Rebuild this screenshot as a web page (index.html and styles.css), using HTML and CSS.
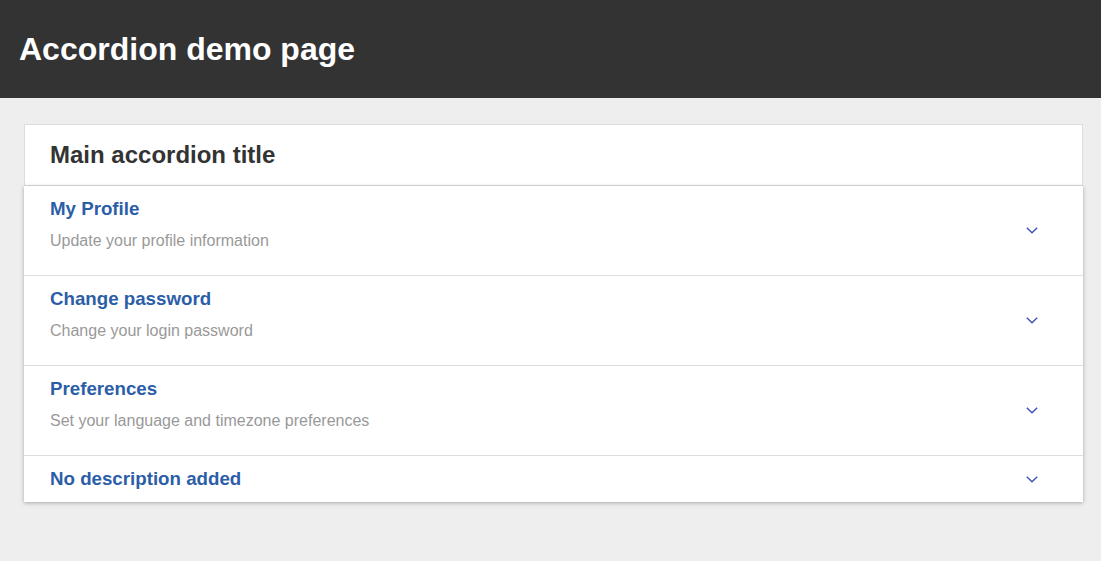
FILE: index.html
```html
<!DOCTYPE html>
<html lang="en">
<head>
<meta charset="utf-8">
<title>Accordion demo page</title>
<link rel="stylesheet" href="styles.css">
</head>
<body>
<header class="topbar">
  <h1 class="page-title">Accordion demo page</h1>
</header>
<main class="content">
  <section class="accordion">
    <div class="accordion-head">
      <h2 class="accordion-title">Main accordion title</h2>
    </div>
    <div class="accordion-items">
      <div class="item">
        <div class="item-text">
          <h3 class="item-title">My Profile</h3>
          <p class="item-desc">Update your profile information</p>
        </div>
        <svg class="chev" width="12" height="7" viewBox="0 0 12 7"><polyline points="0.8,0.8 6,5.8 11.2,0.8" fill="none" stroke="#3f51b5" stroke-width="1.4"/></svg>
      </div>
      <div class="item">
        <div class="item-text">
          <h3 class="item-title">Change password</h3>
          <p class="item-desc">Change your login password</p>
        </div>
        <svg class="chev" width="12" height="7" viewBox="0 0 12 7"><polyline points="0.8,0.8 6,5.8 11.2,0.8" fill="none" stroke="#3f51b5" stroke-width="1.4"/></svg>
      </div>
      <div class="item">
        <div class="item-text">
          <h3 class="item-title">Preferences</h3>
          <p class="item-desc">Set your language and timezone preferences</p>
        </div>
        <svg class="chev" width="12" height="7" viewBox="0 0 12 7"><polyline points="0.8,0.8 6,5.8 11.2,0.8" fill="none" stroke="#3f51b5" stroke-width="1.4"/></svg>
      </div>
      <div class="item item-last">
        <div class="item-text">
          <h3 class="item-title">No description added</h3>
        </div>
        <svg class="chev" width="12" height="7" viewBox="0 0 12 7"><polyline points="0.8,0.8 6,5.8 11.2,0.8" fill="none" stroke="#3f51b5" stroke-width="1.4"/></svg>
      </div>
    </div>
  </section>
</main>
</body>
</html>
```
FILE: styles.css
```css
html, body {
  margin: 0;
  padding: 0;
}
body {
  background: #eeeeee;
  font-family: "Liberation Sans", Arial, sans-serif;
}
.topbar {
  background: #333333;
  height: 98px;
  padding: 0 19px;
  display: flex;
  align-items: center;
}
.page-title {
  margin: 0;
  color: #ffffff;
  font-size: 32px;
  font-weight: bold;
}
.content {
  padding: 26px 18px 40px 24px;
}
.accordion {
  background: #ffffff;
}
.accordion-head {
  border: 1px solid #dddddd;
  box-sizing: border-box;
  height: 62px;
  padding: 0 25px;
  display: flex;
  align-items: center;
}
.accordion-title {
  margin: 0;
  font-size: 24px;
  font-weight: bold;
  color: #333333;
  line-height: 28px;
}
.accordion-items {
  background: #ffffff;
  box-shadow: 0 1px 4px rgba(0, 0, 0, 0.3);
}
.item {
  display: flex;
  align-items: center;
  padding: 12px 45px 12px 26px;
  border-bottom: 1px solid #dddddd;
}
.item-last {
  border-bottom: none;
}
.item-text {
  flex: 1;
}
.item-title {
  margin: 0;
  font-size: 18.72px;
  line-height: 22px;
  font-weight: bold;
  color: #2c5ea8;
}
.item-desc {
  margin: 12px 0 13px;
  font-size: 16px;
  line-height: 18px;
  color: #999999;
}
.chev {
  display: block;
  flex: none;
}
```
